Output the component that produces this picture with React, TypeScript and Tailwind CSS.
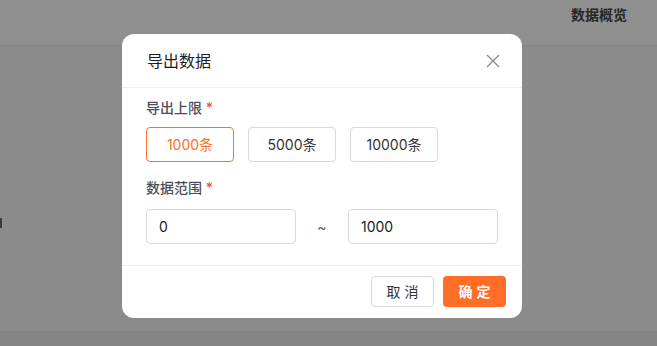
import React from "react";

export default function App() {
  const font = { fontFamily: '"Inter", "Noto Sans CJK SC", sans-serif' };
  return (
    <div className="relative w-[657px] h-[346px] overflow-hidden bg-[#8b8b8b]" style={font}>
      <div className="h-[46px] bg-[#8f8f8f] border-b border-[#858585] flex justify-end items-center pr-[30px]">
        <span className="text-[14px] font-semibold text-[#262626] -mt-[16px]">数据概览</span>
      </div>
      <div className="absolute left-0 top-[218px] w-[2px] h-[10px] bg-[#3a3a3a]" />
      <div className="absolute left-0 right-0 top-[331px] h-[15px] bg-[#868686] border-t border-[#828282]" />

      <div className="absolute left-[122px] top-[34px] w-[400px] h-[284px] bg-white rounded-[12px] flex flex-col">
        <div className="h-[54px] flex items-center justify-between pl-[25px] pr-[22px] border-b border-[#eeeeee]">
          <span className="text-[16px] text-[#1d1d1d]">导出数据</span>
          <svg width="14" height="14" viewBox="0 0 14 14" fill="none" stroke="#8a8a8a" strokeWidth="1.3">
            <path d="M1 1L13 13M13 1L1 13" />
          </svg>
        </div>
        <div className="px-[24px] pt-[10px] flex flex-col">
          <div className="text-[14px] text-[#4e4e54] font-medium leading-[20px]">
            导出上限 <span className="text-[#f54a45]">*</span>
          </div>
          <div className="flex gap-[14px] mt-[9px]">
            <div className="w-[88px] h-[35px] rounded-[4px] border border-[#ff6d28] text-[#ff6d28] text-[14px] flex items-center justify-center">1000条</div>
            <div className="w-[88px] h-[35px] rounded-[4px] border border-[#d9d9d9] text-[#333] text-[14px] flex items-center justify-center">5000条</div>
            <div className="w-[88px] h-[35px] rounded-[4px] border border-[#d9d9d9] text-[#333] text-[14px] flex items-center justify-center">10000条</div>
          </div>
          <div className="text-[14px] text-[#4e4e54] font-medium leading-[20px] mt-[16px]">
            数据范围 <span className="text-[#f54a45]">*</span>
          </div>
          <div className="flex items-center mt-[11px]">
            <div className="w-[150px] h-[35px] rounded-[4px] border border-[#d9d9d9] text-[14px] text-[#222] flex items-center pl-[12px]">0</div>
            <div className="flex-1 text-center text-[14px] text-[#555]">~</div>
            <div className="w-[150px] h-[35px] rounded-[4px] border border-[#d9d9d9] text-[14px] text-[#222] flex items-center pl-[12px]">1000</div>
          </div>
        </div>
        <div className="mt-[21px] border-t border-[#eeeeee] flex justify-end gap-[9px] pr-[16px] pt-[10px]">
          <div className="w-[63px] h-[31px] rounded-[4px] border border-[#d9d9d9] text-[14px] text-[#333] flex items-center justify-center tracking-[4px] pl-[4px]">取消</div>
          <div className="w-[63px] h-[31px] rounded-[4px] bg-[#ff6d26] text-[14px] text-white font-semibold flex items-center justify-center tracking-[4px] pl-[4px]">确定</div>
        </div>
      </div>
    </div>
  );
}
